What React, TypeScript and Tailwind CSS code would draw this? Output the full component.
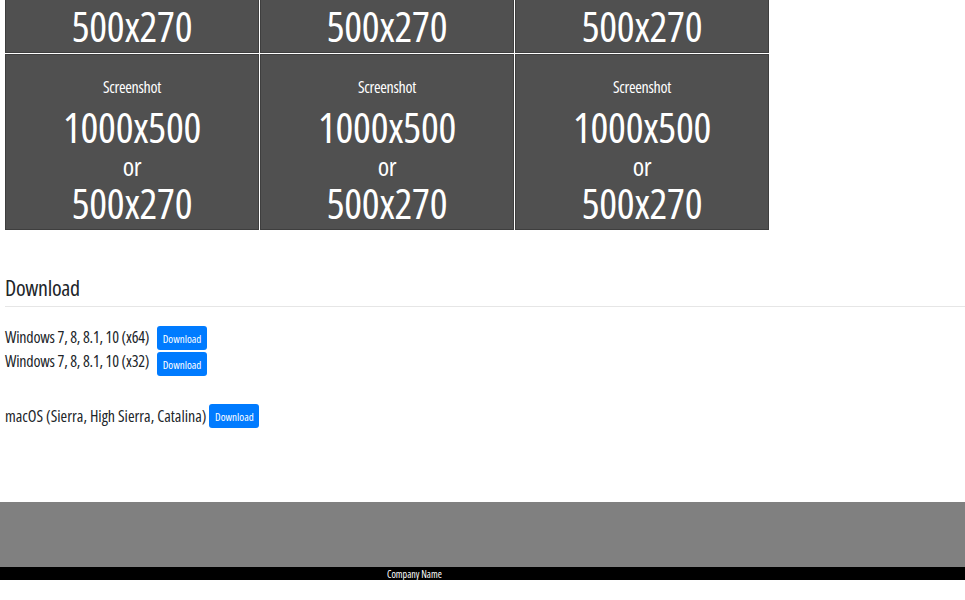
const tiles = [0, 1, 2, 3, 4, 5];

const windowsBuilds = ["Windows 7, 8, 8.1, 10 (x64)", "Windows 7, 8, 8.1, 10 (x32)"];

function Placeholder() {
  return (
    <div className="h-[176px] overflow-hidden border border-[#3e3e3e] bg-[#505050] text-white flex flex-col items-center pt-[16px] tracking-[-0.3px]">
      <span className="text-[16px] leading-[32px]">Screenshot</span>
      <span className="text-[42px] leading-[48px]">1000x500</span>
      <span className="text-[26px] leading-[30px]">or</span>
      <span className="text-[42px] leading-[44px]">500x270</span>
    </div>
  );
}

function DownloadButton() {
  return (
    <button className="h-[24px] w-[50px] rounded-[3px] bg-[#007bff] text-[11px] leading-none tracking-normal text-white">
      Download
    </button>
  );
}

export default function App() {
  return (
    <div className="min-h-[600px] bg-white font-['Open_Sans',sans-serif] font-stretch-[75%] text-[#212529]">
      <main className="pl-[5px]">
        <section className="-mt-[123px] grid w-[764px] grid-cols-3 gap-px">
          {tiles.map((t) => (
            <Placeholder key={t} />
          ))}
        </section>

        <h4 className="mt-[44px] text-[22px] leading-[26px] tracking-[-0.3px]">Download</h4>
        <hr className="mt-[6px] border-t border-[#e6e6e6]" />

        <section className="mt-[19px] flex items-start tracking-[-0.2px]">
          <div className="flex w-[152px] flex-col text-[16px] leading-[23.5px]">
            {windowsBuilds.map((b) => (
              <span key={b}>{b}</span>
            ))}
          </div>
          <div className="flex flex-col gap-[2px]">
            {windowsBuilds.map((b) => (
              <DownloadButton key={b} />
            ))}
          </div>
        </section>

        <section className="mt-[28px] flex h-[24px] items-center gap-[3px]">
          <span className="text-[16px] leading-[24px]">macOS (Sierra, High Sierra, Catalina)</span>
          <DownloadButton />
        </section>
      </main>

      <footer className="mt-[74px]">
        <div className="h-[65px] bg-[#808080]" />
        <div className="flex h-[13px] items-center bg-black pl-[387px] text-[10px] leading-none text-white">
          Company Name
        </div>
      </footer>
    </div>
  );
}
